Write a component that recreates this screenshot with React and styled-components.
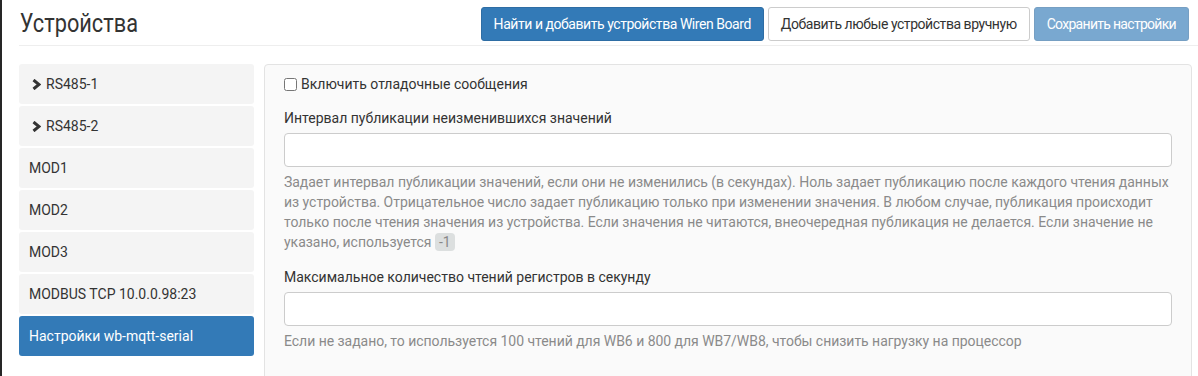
import styled, { createGlobalStyle } from "styled-components";

const GlobalStyle = createGlobalStyle`
    html, body {
        margin: 0;
        padding: 0;
        background: #fff;
    }
    body {
        font-family: Roboto, "Liberation Sans", sans-serif;
        font-size: 14px;
        line-height: 20px;
        color: #333;
    }
    * {
        box-sizing: border-box;
    }
`

const ports = [
    { name: "RS485-1", group: true },
    { name: "RS485-2", group: true },
    { name: "MOD1" },
    { name: "MOD2" },
    { name: "MOD3" },
    { name: "MODBUS TCP 10.0.0.98:23" },
    { name: "Настройки wb-mqtt-serial", active: true },
]

function Chevron() {
    return (
        <svg width="9" height="11" viewBox="0 0 9 11">
            <path d="M1.5 1 L7 5.5 L1.5 10" fill="none" stroke="#333" strokeWidth="3" strokeLinejoin="miter" />
        </svg>
    )
}

export default function App() {
    return (
        <>
            <GlobalStyle />
            <Page>
                <Header>
                    <Title>Устройства</Title>
                    <Toolbar>
                        <Button variant="primary">Найти и добавить устройства Wiren Board</Button>
                        <Button>Добавить любые устройства вручную</Button>
                        <Button variant="primary" disabled>Сохранить настройки</Button>
                    </Toolbar>
                </Header>

                <Content>
                    <Sidebar>
                        {ports.map((p) => (
                            <NavItem key={p.name} active={p.active}>
                                {p.group && <ChevronBox><Chevron /></ChevronBox>}
                                {p.name}
                            </NavItem>
                        ))}
                    </Sidebar>

                    <Panel>
                        <CheckRow>
                            <Checkbox type="checkbox" />
                            <span>Включить отладочные сообщения</span>
                        </CheckRow>

                        <FormGroup>
                            <Label>Интервал публикации неизменившихся значений</Label>
                            <Input type="text" />
                            <Help>
                                Задает интервал публикации значений, если они не изменились (в секундах). Ноль задает публикацию после каждого чтения данных из устройства. Отрицательное число задает публикацию только при изменении значения. В любом случае, публикация происходит только после чтения значения из устройства. Если значения не читаются, внеочередная публикация не делается. Если значение не указано, используется <Code>-1</Code>
                            </Help>
                        </FormGroup>

                        <FormGroup>
                            <Label>Максимальное количество чтений регистров в секунду</Label>
                            <Input type="text" />
                            <Help>
                                Если не задано, то используется 100 чтений для WB6 и 800 для WB7/WB8, чтобы снизить нагрузку на процессор
                            </Help>
                        </FormGroup>
                    </Panel>
                </Content>
            </Page>
        </>
    )
}

const Page = styled.div`
    height: 100vh;
    overflow: hidden;
    border-left: 2px solid #262626;
    padding-left: 17px;
`

const Header = styled.header`
    height: 46px;
    display: flex;
    justify-content: space-between;
    align-items: flex-start;
    border-bottom: 1px solid #eee;
    padding-top: 7px;
    padding-right: 9px;
`

const Title = styled.h1`
    margin: 0;
    padding-top: 2px;
    padding-left: 1px;
    font-size: 25px;
    font-weight: 400;
    line-height: 30px;
    color: #333;
    transform: scaleX(0.87);
    transform-origin: left center;
`

const Toolbar = styled.div`
    display: flex;
    gap: 4px;
`

const Button = styled.button`
    font-family: inherit;
    font-size: 14px;
    letter-spacing: ${(p) => (p.disabled ? "-0.7px" : "-0.45px")};
    line-height: 20px;
    height: 34px;
    padding: 6px 12px;
    border-radius: 3px;
    border: 1px solid ${(p) => (p.variant === "primary" ? "#2e6da4" : "#ccc")};
    background: ${(p) => (p.variant === "primary" ? "#337ab7" : "#fff")};
    color: ${(p) => (p.variant === "primary" ? "#fff" : "#333")};
    opacity: ${(p) => (p.disabled ? 0.65 : 1)};
    white-space: nowrap;
    cursor: ${(p) => (p.disabled ? "not-allowed" : "pointer")};
`

const Content = styled.div`
    display: flex;
    align-items: flex-start;
    gap: 10px;
    margin-top: 18px;
    padding-right: 6px;
`

const Sidebar = styled.nav`
    width: 235px;
    flex-shrink: 0;
    display: flex;
    flex-direction: column;
    gap: 2px;
`

const NavItem = styled.div`
    height: 40px;
    display: flex;
    align-items: center;
    padding: 0 10px;
    border-radius: 3px;
    background: ${(p) => (p.active ? "#337ab7" : "#f4f4f4")};
    color: ${(p) => (p.active ? "#fff" : "#333")};
`

const ChevronBox = styled.span`
    display: inline-flex;
    margin-left: 3px;
    margin-right: 5px;
`

const Panel = styled.section`
    flex: 1;
    min-height: 340px;
    background: #fafafa;
    border: 1px solid #e3e3e3;
    border-radius: 4px;
    padding: 9px 19px 19px;
`

const CheckRow = styled.label`
    display: flex;
    align-items: center;
    gap: 4px;
    height: 20px;
    margin-bottom: 14px;
`

const Checkbox = styled.input`
    width: 13px;
    height: 13px;
    margin: 0;
`

const FormGroup = styled.div`
    margin-bottom: 15px;
`

const Label = styled.div`
    margin-bottom: 5px;
`

const Input = styled.input`
    display: block;
    width: 100%;
    height: 34px;
    border: 1px solid #ccc;
    border-radius: 4px;
    background: #fff;
    padding: 6px 12px;
    font-family: inherit;
    font-size: 14px;
`

const Help = styled.div`
    margin-top: 5px;
    margin-right: -3px;
    letter-spacing: -0.03px;
    color: #8a8a8a;
`

const Code = styled.code`
    font-family: inherit;
    font-size: 14px;
    padding: 1px 4px;
    border-radius: 4px;
    background: #dcdfdf;
    color: #888;
`
